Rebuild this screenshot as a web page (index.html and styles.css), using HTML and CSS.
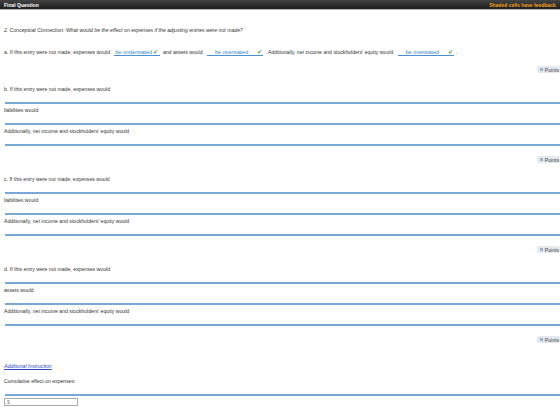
FILE: index.html
```html
<!DOCTYPE html>
<html>
    <head>
        <title>Final Question</title>
        <link rel="stylesheet" href="styles.css">
    </head>
    <body>
        <div class="header">
            <span class="title">Final Question</span>
            <span class="feedback">Shaded cells have feedback.</span>
        </div>
        <div class="content">
            <p class="question">2. Conceptual Connection: What would be the effect on expenses if the adjusting entries were not made?</p>
            <p class="line-a">a. If this entry were not made, expenses would
                <span class="answer short">be understated <span class="check">&#10004;</span></span>
                and assets would
                <span class="answer wide"><span>be overstated</span> <span class="check">&#10004;</span></span>
                . Additionally, net income and stockholders' equity would
                <span class="answer wide"><span>be overstated</span> <span class="check">&#10004;</span></span> .</p>
            <div class="points-row"><span class="points"><span class="icon"></span>Points</span></div>

            <div class="part">
                <div class="field"><div class="label">b. If this entry were not made, expenses would</div><div class="blank"></div></div>
                <div class="field"><div class="label">liabilities would</div><div class="blank"></div></div>
                <div class="field"><div class="label">Additionally, net income and stockholders' equity would</div><div class="blank"></div></div>
                <div class="points-row"><span class="points"><span class="icon"></span>Points</span></div>
            </div>

            <div class="part">
                <div class="field"><div class="label">c. If this entry were not made, expenses would</div><div class="blank"></div></div>
                <div class="field"><div class="label">liabilities would</div><div class="blank"></div></div>
                <div class="field"><div class="label">Additionally, net income and stockholders' equity would</div><div class="blank"></div></div>
                <div class="points-row"><span class="points"><span class="icon"></span>Points</span></div>
            </div>

            <div class="part">
                <div class="field"><div class="label">d. If this entry were not made, expenses would</div><div class="blank"></div></div>
                <div class="field"><div class="label">assets would</div><div class="blank"></div></div>
                <div class="field"><div class="label">Additionally, net income and stockholders' equity would</div><div class="blank"></div></div>
                <div class="points-row"><span class="points"><span class="icon"></span>Points</span></div>
            </div>

            <a class="instruction" href="#">Additional Instruction</a>
            <div class="field cumulative"><div class="label">Cumulative effect on expenses:</div><div class="blank"></div></div>
            <div class="money">$</div>
        </div>
    </body>
</html>
```

FILE: styles.css
```css
body {
    margin: 0;
    font-family: "Liberation Sans", Arial, sans-serif;
    font-size: 5.15px;
    color: #333;
    background-color: #fff;
    overflow: hidden;
}
.header {
    height: 9px;
    display: flex;
    justify-content: space-between;
    align-items: center;
    padding: 0 3px 0 4px;
    background: linear-gradient(#444, #1c1c1c);
    border-bottom: 1px solid #b5b5b5;
    font-size: 5px;
    font-weight: bold;
}
.title {
    color: #fff;
}
.feedback {
    color: #f0a020;
}
.content {
    padding-left: 4px;
}
p {
    margin: 0;
    line-height: 7px;
}
.question {
    margin-top: 17px;
    font-style: italic;
}
.line-a {
    margin-top: 15px;
}
.answer {
    display: inline-flex;
    align-items: center;
    gap: 1px;
    width: 46px;
    box-sizing: border-box;
    margin: 0 1px 0 3px;
    padding-left: 1px;
    color: #3a86cc;
    font-size: 5.5px;
    border-bottom: 1px solid #4a90d0;
    line-height: 6px;
}
.answer.wide {
    width: 56px;
    justify-content: space-between;
    padding: 0 1px 0 8px;
}
.check {
    color: #3aa53a;
    font-size: 6px;
}
.points-row {
    display: flex;
    justify-content: flex-end;
    margin-top: 10px;
    height: 7px;
}
.points {
    display: flex;
    align-items: center;
    gap: 2px;
    height: 7px;
    padding: 0 1px 0 3px;
    border-radius: 2px;
    background-color: #e4e9ee;
    color: #444;
}
.icon {
    width: 3px;
    height: 3px;
    background-color: #9bb4cc;
}
.part {
    margin-top: 13px;
}
.part .points-row {
    margin-top: 10px;
}
.field {
    margin-bottom: 3px;
}
.label {
    line-height: 7px;
}
.blank {
    height: 9px;
    margin-left: 1px;
    border-bottom: 2px solid #7aa8d6;
}
.instruction {
    display: block;
    margin-top: 20px;
    line-height: 7px;
    color: #2a45c8;
    font-style: italic;
}
.cumulative {
    margin-top: 8px;
    margin-bottom: 2px;
}
.money {
    width: 70px;
    height: 6px;
    line-height: 6px;
    padding-left: 2px;
    border: 1px solid #aaa;
    color: #888;
}
```
